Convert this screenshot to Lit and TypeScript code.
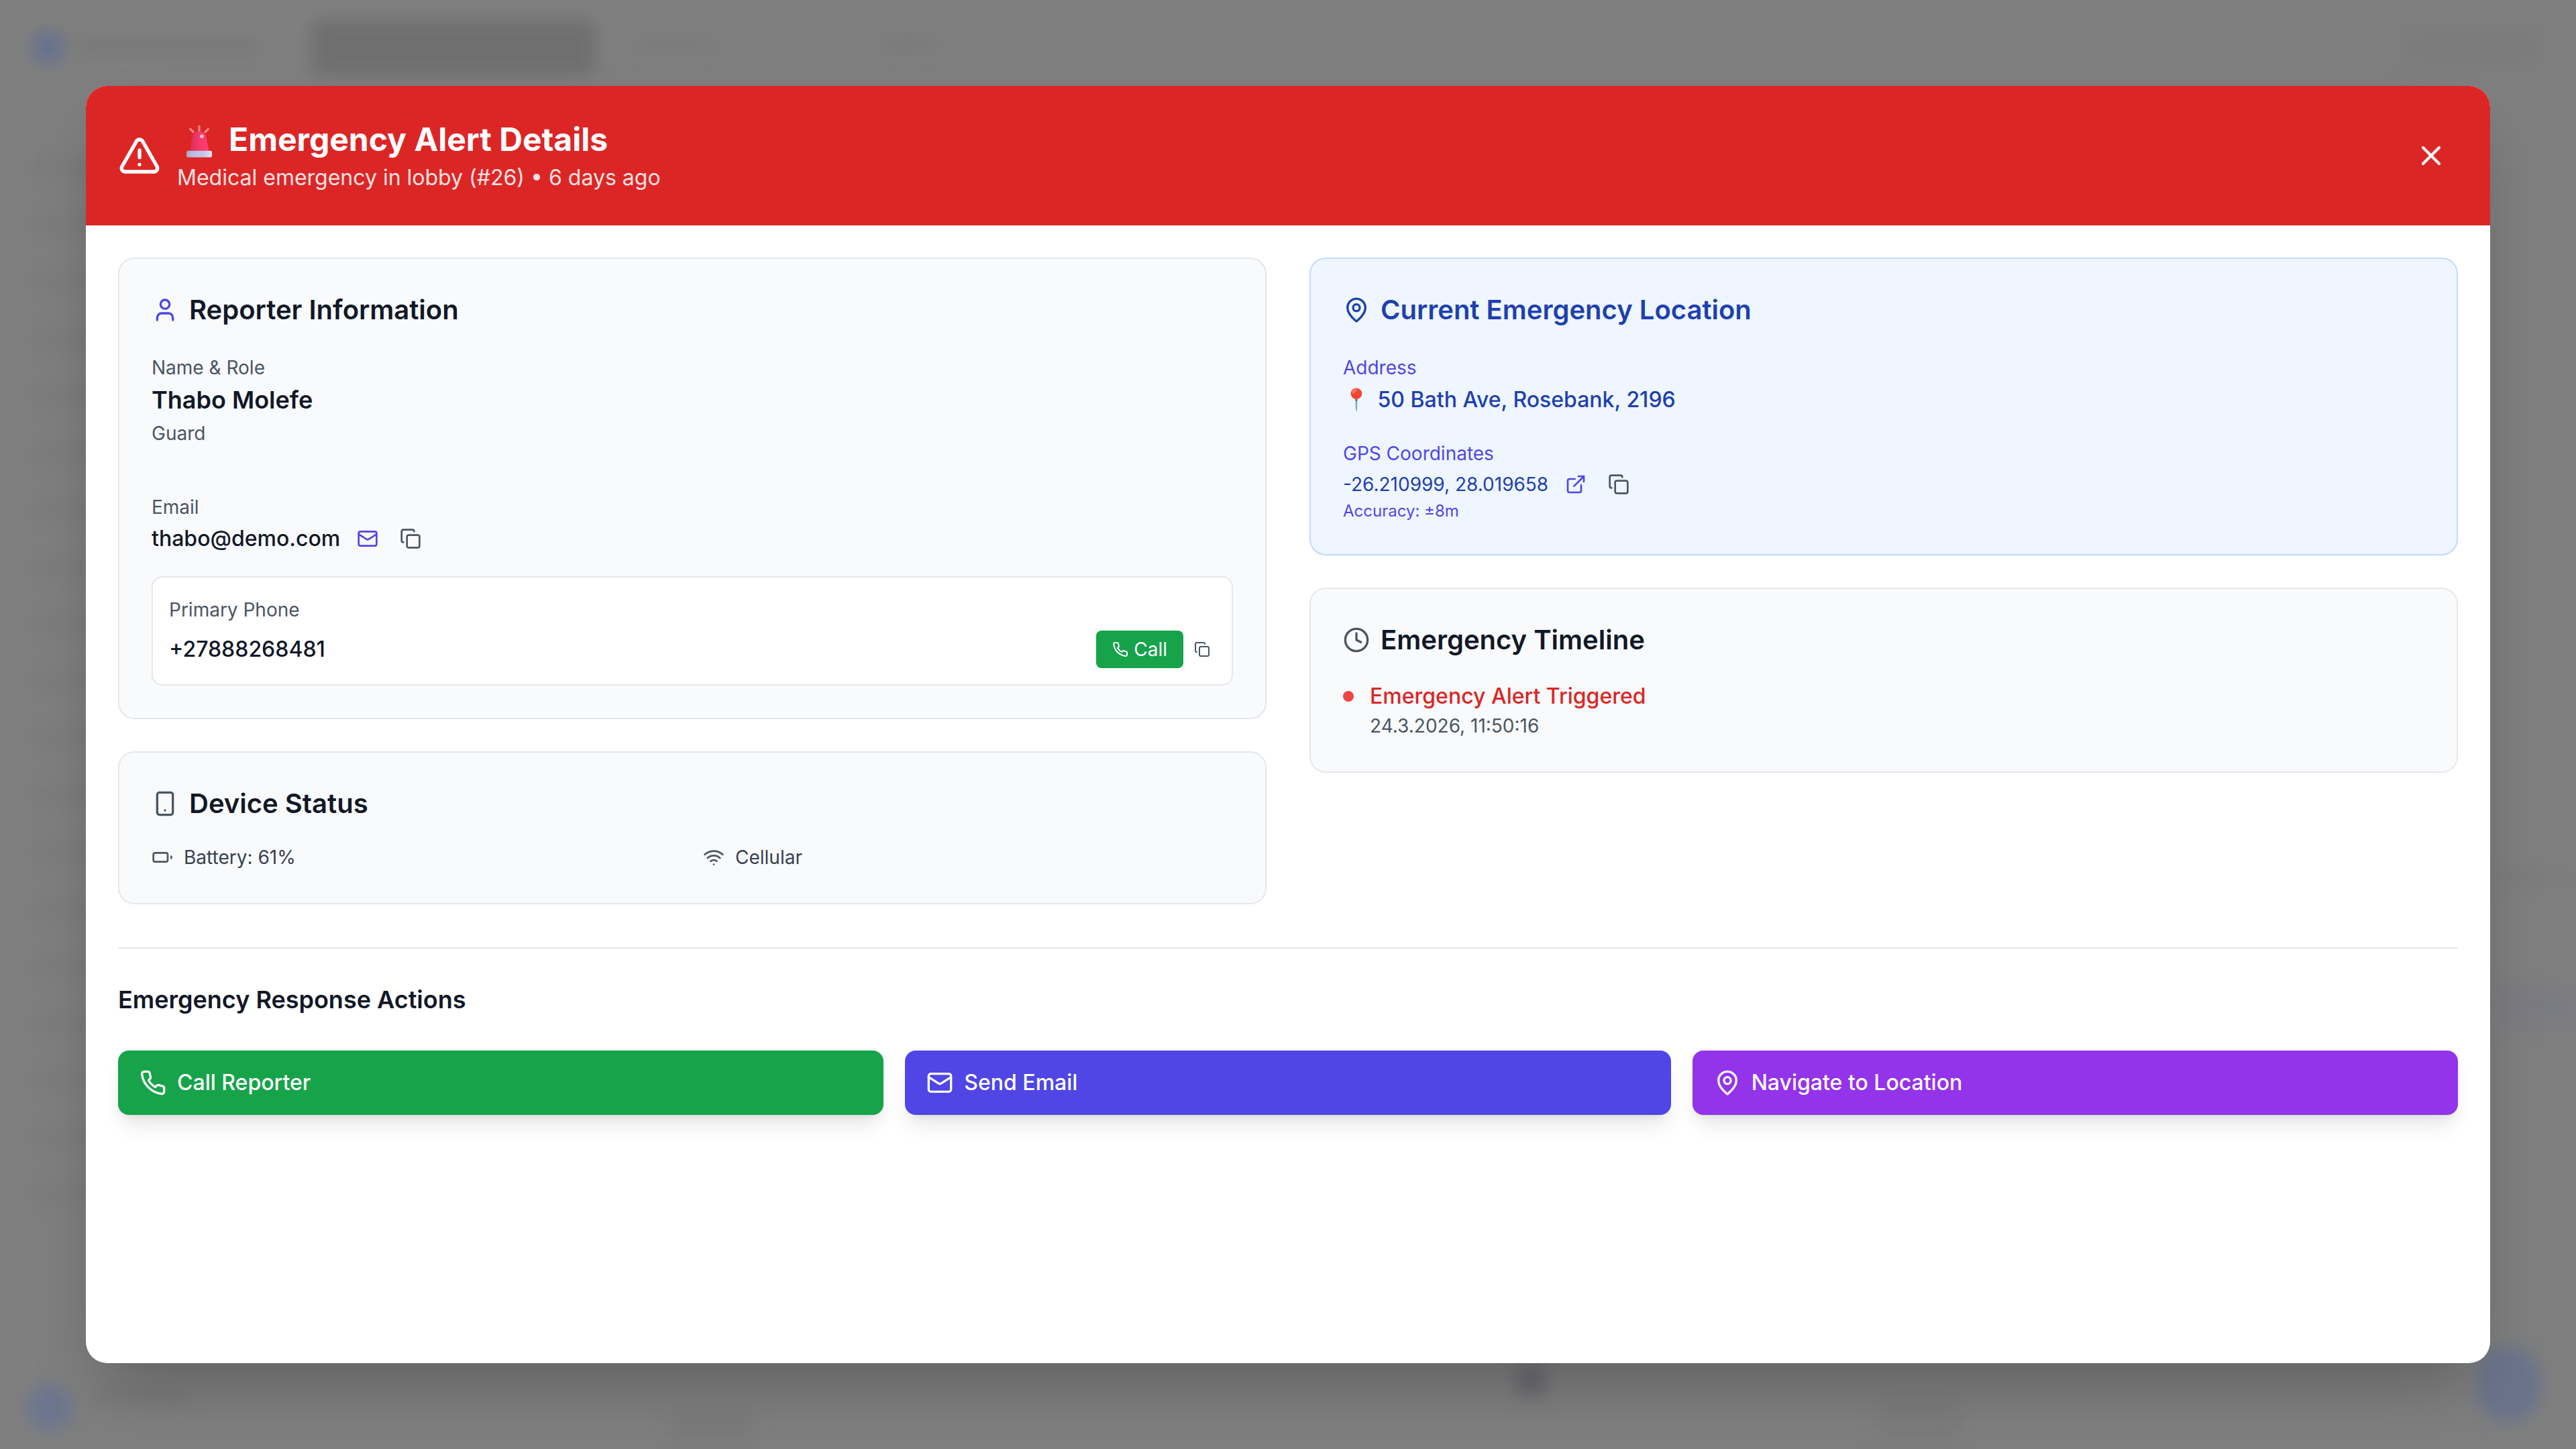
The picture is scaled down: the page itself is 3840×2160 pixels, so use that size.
import { LitElement, html, css, svg } from "lit";
import { customElement } from "lit/decorators.js";

const ic = (body: unknown, cls = "") => html`<svg class="ic ${cls}" viewBox="0 0 24 24" fill="none" stroke="currentColor" stroke-width="2" stroke-linecap="round" stroke-linejoin="round">${body}</svg>`;
const I = {
  alert: svg`<path d="m21.73 18-8-14a2 2 0 0 0-3.48 0l-8 14A2 2 0 0 0 4 21h16a2 2 0 0 0 1.73-3"/><path d="M12 9v4"/><path d="M12 17h.01"/>`,
  x: svg`<path d="M18 6 6 18"/><path d="m6 6 12 12"/>`,
  user: svg`<path d="M19 21v-2a4 4 0 0 0-4-4H9a4 4 0 0 0-4 4v2"/><circle cx="12" cy="7" r="4"/>`,
  mail: svg`<rect width="20" height="16" x="2" y="4" rx="2"/><path d="m22 7-8.97 5.7a1.94 1.94 0 0 1-2.06 0L2 7"/>`,
  copy: svg`<rect width="14" height="14" x="8" y="8" rx="2" ry="2"/><path d="M4 16c-1.1 0-2-.9-2-2V4c0-1.1.9-2 2-2h10c1.1 0 2 .9 2 2"/>`,
  phone: svg`<path d="M22 16.92v3a2 2 0 0 1-2.18 2 19.79 19.79 0 0 1-8.63-3.07 19.5 19.5 0 0 1-6-6 19.79 19.79 0 0 1-3.07-8.67A2 2 0 0 1 4.11 2h3a2 2 0 0 1 2 1.72 12.84 12.84 0 0 0 .7 2.81 2 2 0 0 1-.45 2.11L8.09 9.91a16 16 0 0 0 6 6l1.27-1.27a2 2 0 0 1 2.11-.45 12.84 12.84 0 0 0 2.81.7A2 2 0 0 1 22 16.92z"/>`,
  pin: svg`<path d="M20 10c0 4.993-5.539 10.193-7.399 11.799a1 1 0 0 1-1.202 0C9.539 20.193 4 14.993 4 10a8 8 0 0 1 16 0"/><circle cx="12" cy="10" r="3"/>`,
  ext: svg`<path d="M15 3h6v6"/><path d="M10 14 21 3"/><path d="M18 13v6a2 2 0 0 1-2 2H5a2 2 0 0 1-2-2V8a2 2 0 0 1 2-2h6"/>`,
  clock: svg`<circle cx="12" cy="12" r="10"/><polyline points="12 6 12 12 16 14"/>`,
  phoneDev: svg`<rect width="14" height="20" x="5" y="2" rx="2" ry="2"/><path d="M12 18h.01"/>`,
  battery: svg`<rect width="16" height="10" x="2" y="7" rx="2" ry="2"/><line x1="22" x2="22" y1="11" y2="13"/>`,
  wifi: svg`<path d="M12 20h.01"/><path d="M2 8.82a15 15 0 0 1 20 0"/><path d="M5 12.859a10 10 0 0 1 14 0"/><path d="M8.5 16.429a5 5 0 0 1 7 0"/>`,
};

const siren = html`<svg class="siren" viewBox="0 0 30 28" aria-label="siren">
  <defs>
    <linearGradient id="dm" x1="0" x2="1" y1="0" y2="0"><stop offset="0" stop-color="#d92c55"/><stop offset=".5" stop-color="#f5386f"/><stop offset="1" stop-color="#f9426f"/></linearGradient>
    <linearGradient id="bs" x1="0" x2="1" y1="0" y2="0"><stop offset="0" stop-color="#a3abb5"/><stop offset=".25" stop-color="#bcbee4"/><stop offset=".7" stop-color="#c6c8ea"/><stop offset="1" stop-color="#e4e5ee"/></linearGradient>
  </defs>
  <g stroke="#f28a88" stroke-width="1.6" stroke-linecap="round">
    <path d="M16.5 4.2V7.6"/><path d="M9.9 6.2 12 8.3"/><path d="M23.2 6.2 21 8.3"/>
  </g>
  <path d="M9.4 22.6 11 13.4a5.4 5.4 0 0 1 11 0l1.6 9.2z" fill="url(#dm)"/>
  <ellipse cx="18.4" cy="11.6" rx="1.5" ry="1.3" fill="#f6bcc4"/>
  <rect x="7" y="22.4" width="19" height="4.8" rx="1.1" fill="url(#bs)"/>
</svg>`;

const bands: number[] = [125, 168, 210, 253, 295, 338, 380, 423, 465, 508, 550, 593, 635, 678, 720, 763, 805, 848, 890];

@customElement("app-root")
export class AppRoot extends LitElement {
  static styles = css`
    :host { display: block; width: 3840px; height: 2160px; overflow: hidden; }
    * { box-sizing: border-box; }
    .stage { zoom: 2; position: relative; width: 1920px; height: 1080px; overflow: hidden; background: #7f7f7f; font-family: Inter, "Noto Sans", sans-serif; color: #111827; }
    .ghost { position: absolute; inset: 0; filter: blur(6px); }
    .ghost i { position: absolute; display: block; }
    .overlay { position: absolute; inset: 0; padding: 64px; display: flex; }
    .modal { flex: 1; background: #fff; border-radius: 16px; box-shadow: 0 25px 50px -12px rgba(0,0,0,.25); overflow: hidden; display: flex; flex-direction: column; }
    .ic { display: block; flex: none; width: 20px; height: 20px; }
    .head { flex: none; height: 104px; background: #dc2626; color: #fff; display: flex; align-items: center; padding: 24px; gap: 12px; }
    .head > .ic { width: 32px; height: 32px; }
    .grow { flex: 1; }
    h1 { margin: 0; font-size: 24px; line-height: 32px; font-weight: 700; display: flex; align-items: center; }
    .siren { display: block; width: 30px; height: 28px; margin-right: 8.5px; flex: none; }
    .head p { margin: .5px 0 -.5px; font-size: 16px; line-height: 24px; color: #fee2e2; }
    .close { padding: 8px; display: block; }
    .close .ic { width: 24px; height: 24px; }
    .body { padding: 24px; flex: 1; }
    .cols { display: grid; grid-template-columns: 1fr 1fr; column-gap: 32px; align-items: start; }
    .col { display: flex; flex-direction: column; gap: 24px; }
    .card { background: #f9fafb; border: 1px solid #e5e7eb; border-radius: 12px; padding: 24px; }
    .blue { background: #eff6ff; border-color: #bfdbfe; }
    h2 { margin: 0 0 16px; font-size: 20px; line-height: 28px; font-weight: 600; display: flex; align-items: center; gap: 8px; }
    .wide { margin-bottom: 19.2px; }
    .blue h2 { color: #1e40af; }
    .u { color: #4f46e5; }
    .g { color: #4b5563; }
    .navy { color: #1e40af; }
    .lab { font-size: 14px; line-height: 20px; color: #4b5563; }
    .blue .lab { color: #4f46e5; }
    .name { font-size: 18px; line-height: 28px; font-weight: 600; }
    .guard { margin-top: .6px; }
    .emailLab { margin-top: 35.3px; margin-bottom: 1.2px; }
    .row { display: flex; align-items: center; font-size: 16px; line-height: 24px; }
    .m5 { font-weight: 500; }
    .btnIc { padding: 4px; display: block; margin-left: 8px; }
    .btnIc .ic { width: 16px; height: 16px; }
    .first { margin-left: 8.6px; }
    .phone { margin-top: 16px; background: #fff; border: 1px solid #e5e7eb; border-radius: 8px; padding: 12px; }
    .phone .lab { line-height: 24px; margin-bottom: 3.5px; padding-top: .3px; }
    .pr { display: flex; align-items: center; justify-content: space-between; font-size: 16px; line-height: 24px; font-weight: 500; height: 28px; }
    .pr > div { display: flex; align-items: center; gap: 4px; }
    .call { display: flex; align-items: center; gap: 4px; height: 28px; padding: 0 12px; background: #16a34a; color: #fff; border-radius: 4px; font-size: 14px; line-height: 20px; font-weight: 400; }
    .call .ic { width: 12px; height: 12px; }
    .cp { padding: 4px; color: #4b5563; }
    .cp .ic { width: 12px; height: 12px; }
    .stat { display: grid; grid-template-columns: 1fr 1fr; column-gap: 16px; }
    .stat > div { display: flex; align-items: center; gap: 8px; font-size: 14px; line-height: 20px; color: #374151; }
    .stat .ic { width: 16px; height: 16px; color: #4b5563; }
    .emo { font-family: "Noto Color Emoji", sans-serif; margin-right: 1.6px; }
    .med { font-weight: 500; }
    .addrLab { margin-bottom: 1.8px; }
    .gap { margin-top: 17.8px; margin-bottom: 1.2px; }
    .sm { font-size: 14px; }
    .acc { font-size: 12px; line-height: 16px; }
    .tl { display: flex; gap: 12px; }
    .dot { width: 8px; height: 8px; border-radius: 50%; background: #ef4444; margin-top: 8px; flex: none; }
    .tlT { font-size: 16px; line-height: 24px; font-weight: 500; color: #dc2626; }
    .tlD { font-size: 14px; line-height: 20px; color: #4b5563; }
    .actions { margin-top: 32px; border-top: 1px solid #e5e7eb; padding-top: 24px; }
    h3 { margin: 0 0 24px; font-size: 18px; line-height: 28px; font-weight: 600; }
    .btns { display: grid; grid-template-columns: repeat(3, 1fr); gap: 16px; }
    .btn { height: 48px; border-radius: 8px; color: #fff; display: flex; align-items: center; gap: 8px; padding: 0 16px; font-size: 16px; line-height: 24px; font-weight: 500; box-shadow: 0 10px 15px -3px rgba(0,0,0,.1), 0 4px 6px -4px rgba(0,0,0,.1); }
    .green { background: #16a34a; }
    .indigo { background: #4f46e5; }
    .purple { background: #9333ea; }
  `;

  private ghost(l: number, t: number, w: number, h: number, c: string, r = 0) {
    return html`<i style="left:${l}px;top:${t}px;width:${w}px;height:${h}px;background:${c};border-radius:${r}px"></i>`;
  }

  render() {
    return html`<div class="stage">
      <div class="ghost" aria-hidden="true">
        ${this.ghost(24, 23, 24, 24, "#67708f", 12)}
        ${this.ghost(58, 31, 135, 8, "#767676")}
        ${this.ghost(232, 15, 212, 41, "#6f6f6f", 8)}
        ${this.ghost(470, 31, 64, 8, "#7a7a7a")}
        ${this.ghost(658, 27, 40, 12, "#7a7a7a")}
        ${this.ghost(1790, 20, 104, 30, "#7c7c7c")}
        ${bands.map(y => html`${this.ghost(22, y - 4, 20, 8, "#797979")}${this.ghost(50, y - 4, 20, 8, "#797979")}`)}
        ${this.ghost(20, 1032, 34, 34, "#6c7690", 17)}
        ${this.ghost(1846, 1004, 48, 56, "#6b748c", 24)}
        ${this.ghost(70, 1036, 70, 8, "#787878")}
        ${this.ghost(1130, 1018, 22, 22, "#6a6a72", 4)}
        ${this.ghost(1860, 650, 60, 8, "#7b7b7b")}
        ${this.ghost(1860, 735, 60, 30, "#7b7b82")}
        ${this.ghost(500, 1050, 60, 30, "#7b7b7b")}
        ${this.ghost(1400, 1040, 60, 40, "#7c7c7c")}
      </div>
      <div class="overlay"><div class="modal">
        <div class="head">
          ${ic(I.alert)}
          <div class="grow">
            <h1>${siren}Emergency Alert Details</h1>
            <p>Medical emergency in lobby (#26) • 6 days ago</p>
          </div>
          <span class="close">${ic(I.x)}</span>
        </div>
        <div class="body">
          <div class="cols">
            <div class="col">
              <div class="card">
                <h2 class="wide"><span class="u">${ic(I.user)}</span>Reporter Information</h2>
                <div class="lab">Name &amp; Role</div>
                <div class="name">Thabo Molefe</div>
                <div class="lab guard">Guard</div>
                <div class="lab emailLab">Email</div>
                <div class="row m5">thabo@demo.com<span class="btnIc first u">${ic(I.mail)}</span><span class="btnIc g">${ic(I.copy)}</span></div>
                <div class="phone">
                  <div class="lab">Primary Phone</div>
                  <div class="pr">+27888268481<div><span class="call">${ic(I.phone)}Call</span><span class="cp">${ic(I.copy)}</span></div></div>
                </div>
              </div>
              <div class="card">
                <h2><span class="g">${ic(I.phoneDev)}</span>Device Status</h2>
                <div class="stat"><div>${ic(I.battery)}Battery: 61%</div><div>${ic(I.wifi)}Cellular</div></div>
              </div>
            </div>
            <div class="col">
              <div class="card blue">
                <h2 class="wide">${ic(I.pin)}Current Emergency Location</h2>
                <div class="lab addrLab">Address</div>
                <div class="row navy med"><span class="emo">📍</span>&nbsp;50 Bath Ave, Rosebank, 2196</div>
                <div class="lab gap">GPS Coordinates</div>
                <div class="row navy sm">-26.210999, 28.019658<span class="btnIc first u">${ic(I.ext)}</span><span class="btnIc g">${ic(I.copy)}</span></div>
                <div class="lab acc">Accuracy: ±8m</div>
              </div>
              <div class="card">
                <h2><span class="g">${ic(I.clock)}</span>Emergency Timeline</h2>
                <div class="tl"><div class="dot"></div><div><div class="tlT">Emergency Alert Triggered</div><div class="tlD">24.3.2026, 11:50:16</div></div></div>
              </div>
            </div>
          </div>
          <div class="actions">
            <h3>Emergency Response Actions</h3>
            <div class="btns">
              <div class="btn green">${ic(I.phone)}Call Reporter</div>
              <div class="btn indigo">${ic(I.mail)}Send Email</div>
              <div class="btn purple">${ic(I.pin)}Navigate to Location</div>
            </div>
          </div>
        </div>
      </div></div>
    </div>`;
  }
}
